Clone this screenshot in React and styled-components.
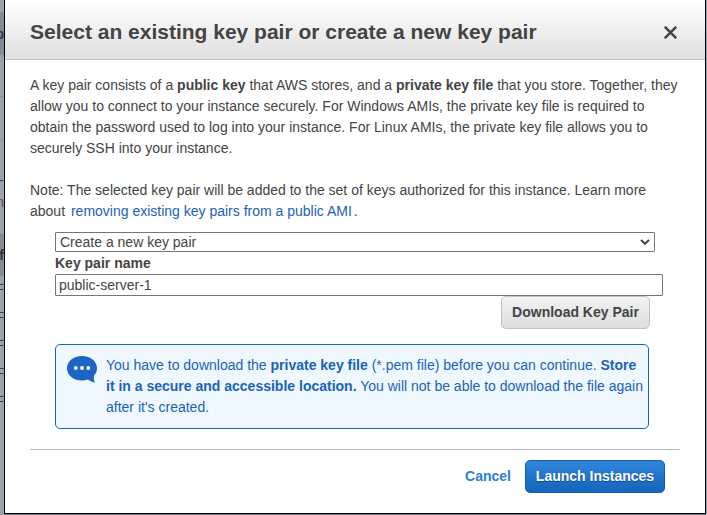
import React from 'react';
import styled, { createGlobalStyle } from 'styled-components';

const GlobalStyle = createGlobalStyle`
  * { box-sizing: border-box; }
  body { margin: 0; overflow: hidden; background: #5b626a; }
  body, button, input, select { font-family: "Liberation Sans", Arial, sans-serif; font-size: 14px; color: #444; }
`;

const Page = styled.div`
  display: grid;
  grid-template-columns: 4px 702px 1px;
  width: 707px;
  height: 515px;
  overflow: hidden;
  background: #6d747c;
`;

const Strip = styled.div`
  overflow: hidden;
  background: #9ba3ab;
`;

const Band = styled.div`
  display: flex;
  justify-content: flex-end;
  align-items: center;
  height: ${(p) => p.$h}px;
  background: ${(p) => p.$bg || '#9ba3ab'};
  color: ${(p) => p.$color || '#333'};
  border-bottom: ${(p) => (p.$line ? '1px solid #8b939b' : '0')};
  font-weight: ${(p) => (p.$bold ? 700 : 400)};
  overflow: hidden;
`;

const FieldEdge = styled.div`
  width: 4px;
  height: 6px;
  border-top: 1px solid #3f4347;
  border-bottom: 1px solid #3f4347;
`;

const Modal = styled.section`
  display: flex;
  flex-direction: column;
  height: 514px;
  background: #fff;
  border: 1px solid #000;
  border-top: 0;
`;

const Header = styled.header`
  display: flex;
  justify-content: space-between;
  align-items: center;
  height: 60px;
  padding: 5px 28px 0 25px;
  background: linear-gradient(#fff, #e0e0e0);
  border-bottom: 1px solid #c4c4c4;
`;

const Title = styled.h1`
  margin: 0;
  font-size: 21px;
  line-height: 26px;
  white-space: nowrap;
`;

const Close = styled.button`
  display: flex;
  padding: 1px 0 0;
  border: 0;
  background: none;
`;

const Body = styled.div`
  flex: 1;
  padding: 15px 25px 0;
  line-height: 21px;
`;

const Paragraph = styled.p`
  margin: 0 0 21px;
  white-space: nowrap;
`;

const Link = styled.a`
  margin: 0 2px;
  color: #1a62ba;
`;

const Form = styled.div`
  display: flex;
  flex-direction: column;
  align-items: flex-start;
  margin: -11px 0 0 25px;
`;

const SelectBox = styled.div`
  display: flex;
  align-items: center;
  justify-content: space-between;
  width: 600px;
  height: 20px;
  padding: 0 4px;
  border: 1px solid #767676;
  border-radius: 1px;
`;

const Label = styled.label`
  height: 22px;
  line-height: 22px;
  font-weight: 700;
`;

const Input = styled.input`
  width: 608px;
  height: 22px;
  padding: 0 3px;
  border: 1px solid #767676;
  border-radius: 1px;
  outline: 0;
`;

const Button = styled.button`
  height: 33px;
  padding: 0 0 2px;
  border-radius: 5px;
  font-weight: 700;
  white-space: nowrap;
`;

const DownloadButton = styled(Button)`
  width: 149px;
  margin-left: 446px;
  border: 1px solid #c3c3c3;
  background: linear-gradient(#f2f2f2, #dedede);
`;

const LaunchButton = styled(Button)`
  width: 140px;
  color: #fff;
  border: 1px solid #0f5fb3;
  background: linear-gradient(#3186da, #1464bc);
  text-shadow: 0 1px 1px #0b488b;
`;

const Notice = styled.div`
  display: flex;
  gap: 9px;
  width: 594px;
  height: 85px;
  margin-top: 15px;
  padding: 10px 0 0 11px;
  border: 1px solid #1166bb;
  border-radius: 5px;
  background: #f0f8ff;
  color: #1a62ba;
  white-space: nowrap;
`;

const Footer = styled.footer`
  display: flex;
  justify-content: flex-end;
  align-items: center;
  gap: 14px;
  height: 54px;
  margin-top: 20px;
  padding-right: 15px;
  border-top: 1px solid #b8b8b8;
`;

const Cancel = styled.a`
  color: #2f7ed8;
  font-weight: 700;
`;

function CloseIcon() {
  return (
    <svg width="13" height="13" viewBox="0 0 13 13">
      <path d="M0.800 0.800L12.200 12.200M12.200 0.800L0.800 12.200" stroke="#444" strokeWidth="2.5" />
    </svg>
  );
}

function ChevronIcon() {
  return (
    <svg width="10" height="6" viewBox="0 0 10 6">
      <path d="M1 1L5 4.8L9 1" fill="none" stroke="#444" strokeWidth="2" />
    </svg>
  );
}

function SpeechIcon() {
  return (
    <svg width="30" height="28" viewBox="0 0 30 28">
      <path d="M15 1C6.5 1 0 6.300 0 13.200C0 20.300 6.500 25.500 15 25.500C17 25.500 19 25.200 20.700 24.600C22.700 26.100 25.500 27.200 28 27.700C26.900 25.500 26.700 23.500 27 20.500C29 18.500 30 16 30 13.200C30 6.300 23.500 1 15 1Z" fill="#1a66c2" />
      <circle cx="8.800" cy="13" r="1.900" fill="#fff" />
      <circle cx="15" cy="13" r="1.900" fill="#fff" />
      <circle cx="21.300" cy="13" r="1.900" fill="#fff" />
    </svg>
  );
}

const rowGaps = [8, 22, 22, 22, 22];

export default function App() {
  return (
    <>
      <GlobalStyle />
      <Page>
        <Strip>
          <Band $h={13} $line />
          <Band $h={42} $bg="#858c94" $color="#243f60" $bold $line>p</Band>
          <Band $h={42} $line />
          <Band $h={44} $line />
          <Band $h={28} />
          <Band $h={21} $color="#343f78">y-</Band>
          <Band $h={23} $color="#703f68">n</Band>
          <Band $h={21} />
          <Band $h={42} $bg="#858c94" $bold $line>of</Band>
          {rowGaps.map((gap, i) => (
            <React.Fragment key={i}>
              <Band $h={gap} />
              <FieldEdge />
            </React.Fragment>
          ))}
        </Strip>
        <Modal>
          <Header>
            <Title>Select an existing key pair or create a new key pair</Title>
            <Close aria-label="Close"><CloseIcon /></Close>
          </Header>
          <Body>
            <Paragraph>
              A key pair consists of a <b>public key</b> that AWS stores, and a <b>private key file</b> that you store. Together, they<br />
              allow you to connect to your instance securely. For Windows AMIs, the private key file is required to<br />
              obtain the password used to log into your instance. For Linux AMIs, the private key file allows you to<br />
              securely SSH into your instance.
            </Paragraph>
            <Paragraph>
              Note: The selected key pair will be added to the set of keys authorized for this instance. Learn more<br />
              about <Link>removing existing key pairs from a public AMI</Link>.
            </Paragraph>
            <Form>
              <SelectBox role="combobox">Create a new key pair<ChevronIcon /></SelectBox>
              <Label htmlFor="key-name">Key pair name</Label>
              <Input id="key-name" defaultValue="public-server-1" />
              <DownloadButton>Download Key Pair</DownloadButton>
              <Notice>
                <SpeechIcon />
                <div>
                  You have to download the <b>private key file</b> (*.pem file) before you can continue. <b>Store</b><br />
                  <b>it in a secure and accessible location.</b> You will not be able to download the file again<br />
                  after it's created.
                </div>
              </Notice>
            </Form>
            <Footer>
              <Cancel>Cancel</Cancel>
              <LaunchButton>Launch Instances</LaunchButton>
            </Footer>
          </Body>
        </Modal>
        <Strip />
      </Page>
    </>
  );
}
